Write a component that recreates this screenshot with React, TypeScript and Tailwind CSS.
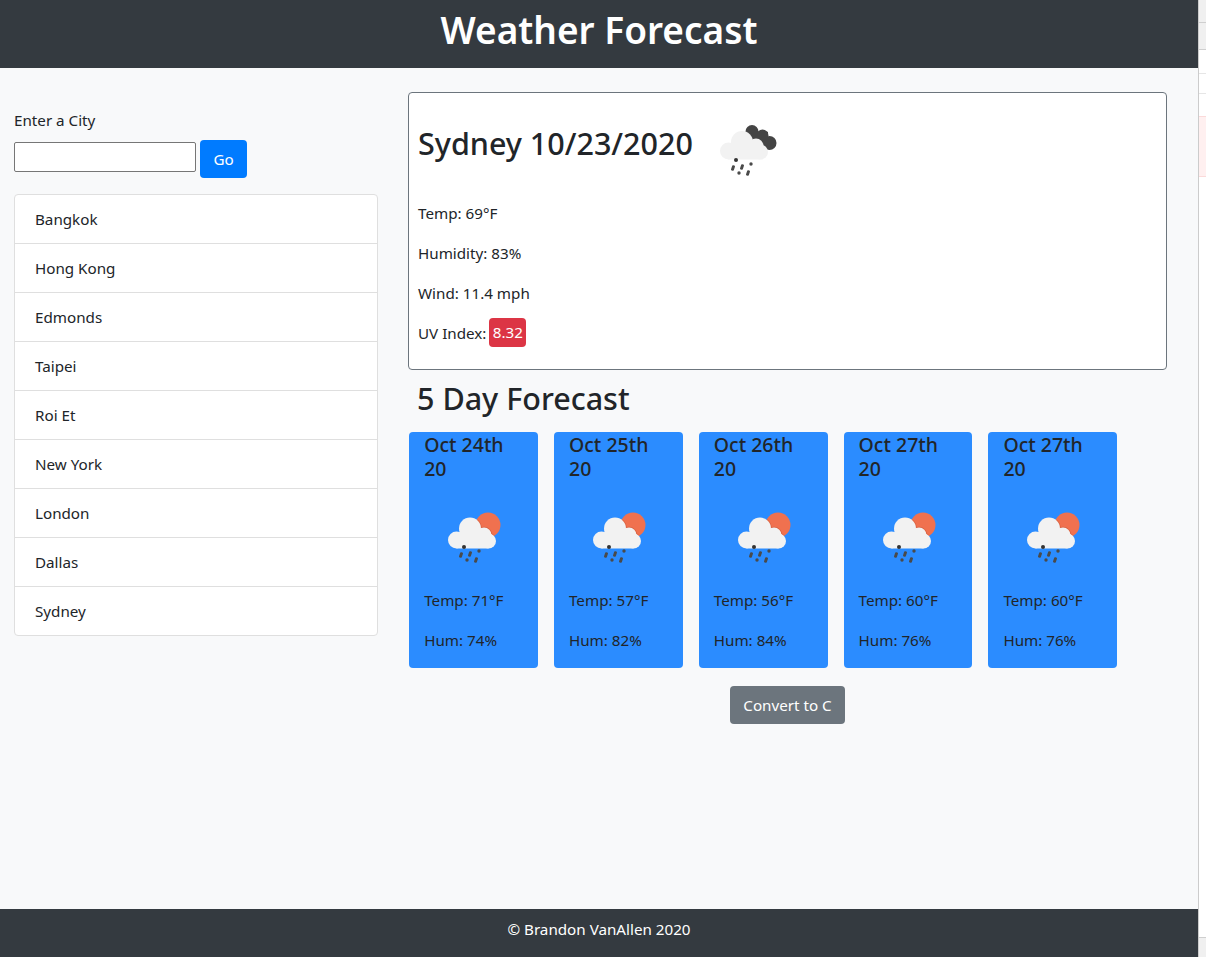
import React from "react";

const CITIES = ["Bangkok", "Hong Kong", "Edmonds", "Taipei", "Roi Et", "New York", "London", "Dallas", "Sydney"];

const FORECAST = [
  { date: "Oct 24th 20", temp: "71", hum: "74" },
  { date: "Oct 25th 20", temp: "57", hum: "82" },
  { date: "Oct 26th 20", temp: "56", hum: "84" },
  { date: "Oct 27th 20", temp: "60", hum: "76" },
  { date: "Oct 27th 20", temp: "60", hum: "76" },
];

const CloudShape = ({ top, ...rest }: { top: number } & React.SVGProps<SVGGElement>) => (
  <g {...rest}>
    <circle cx="13.500" cy="32" r="8.500" />
    <circle cx="27" cy={top} r="11" />
    <circle cx="41" cy="27" r="7.500" />
    <circle cx="45.500" cy="33" r="7.500" />
    <rect x="13.500" y="25" width="32" height="15.500" />
  </g>
);

const Rain = ({ dy }: { dy: number }) => (
  <g fill="#4a4a4a" transform={`translate(0 ${dy})`}>
    <circle cx="21" cy="39" r="2" fill="#333333" />
    <rect x="16.500" y="44.300" width="3" height="5.400" rx="1" transform="rotate(18 18 47)" />
    <rect x="25.500" y="43.300" width="3" height="5.400" rx="1" transform="rotate(18 27 46)" />
    <circle cx="36" cy="43" r="1.700" />
    <circle cx="24" cy="52" r="1.700" />
    <rect x="31.500" y="49.300" width="3" height="5.400" rx="1" transform="rotate(18 33 52)" />
  </g>
);

// light cloud with rain, sun or dark cloud peeking out behind it
const RainIcon = ({ dark }: { dark?: boolean }) => (
  <svg width="65" height="60" viewBox="0 0 65 60" className="block">
    {dark ? (
      <>
        <g fill="#444444">
          <circle cx="37" cy="13.500" r="6.500" />
          <circle cx="47.500" cy="17.500" r="6" />
          <circle cx="54.500" cy="25" r="7" />
          <rect x="37" y="14" width="16" height="16" />
        </g>
        <CloudShape top={23} fill="#f2f2f2" transform="translate(0 1)" />
        <Rain dy={3} />
      </>
    ) : (
      <>
        <clipPath id="sun-disc">
          <circle cx="45" cy="17" r="12.500" />
        </clipPath>
        <circle cx="45" cy="17" r="12.500" fill="#f0714f" />
        <g clipPath="url(#sun-disc)">
          <CloudShape top={20.5} fill="#f2f2f2" stroke="#d9603f" strokeWidth="1.500" />
        </g>
        <CloudShape top={20.5} fill="#f2f2f2" />
        <Rain dy={0} />
      </>
    )}
  </svg>
);

export default function App() {
  return (
    <div className="flex h-[957px] w-[1206px] overflow-hidden bg-white font-['Noto_Sans',sans-serif] text-[15.2px] leading-6 text-[#212529]">
      <div className="flex w-[1198px] shrink-0 flex-col bg-[#f8f9fa]">
        {/* Header */}
        <header className="flex h-[68px] shrink-0 items-center justify-center bg-[#343a40] pb-[8px]">
          <h1 className="text-[37px] font-semibold leading-[48px] text-white">Weather Forecast</h1>
        </header>

        <main className="flex flex-1">
          {/* Search + saved cities */}
          <section className="w-[378px] shrink-0 pl-[14px] pt-[40px]">
            <label className="block h-[24px] leading-6">Enter a City</label>
            <div className="mt-[8px] flex items-center gap-[4px]">
              <input
                type="text"
                className="-mt-[4px] h-[30px] w-[182px] rounded-[2px] border border-[#767676] bg-white"
              />
              <button className="h-[38px] w-[47px] rounded-[4px] bg-[#007bff] text-white">Go</button>
            </div>
            <ul className="mt-[16px] rounded-[4px] border border-[#dfdfdf] bg-white">
              {CITIES.map((city, i) => (
                <li
                  key={city}
                  className={`flex items-center pl-[20px] ${i > 0 ? "h-[49px] border-t border-[#dfdfdf]" : "h-[48px]"}`}
                >
                  {city}
                </li>
              ))}
            </ul>
          </section>

          {/* Current weather + forecast */}
          <section className="ml-[30px] w-[759px] shrink-0 pt-[24px]">
            <div className="h-[278px] rounded-[4px] border border-[#6c757d] bg-white px-[9px]">
              <div className="flex h-[108px] items-start pt-[25px]">
                <h2 className="mt-[6px] text-[30.5px] font-medium leading-[38px]">Sydney 10/23/2020</h2>
                <div className="ml-[22px]">
                  <RainIcon dark />
                </div>
              </div>
              <p className="mb-[16px]">Temp: 69°F</p>
              <p className="mb-[16px]">Humidity: 83%</p>
              <p className="mb-[16px]">Wind: 11.4 mph</p>
              <p className="flex h-6 items-center gap-[3px]">
                UV Index:
                <span className="-mt-[2px] flex h-[29px] w-[37px] shrink-0 items-center justify-center rounded-[4px] bg-[#dc3545] text-white">
                  8.32
                </span>
              </p>
            </div>

            <h2 className="ml-[9px] mt-[9px] text-[30.5px] font-medium leading-[38px]">5 Day Forecast</h2>

            <div className="ml-[1.2px] mt-[15px] flex gap-[16px]">
              {FORECAST.map((day, i) => (
                <div key={i} className="h-[236px] w-[128.8px] rounded-[4px] bg-[#2b8cff] px-[15px]">
                  <h5 className="pt-[1px] text-[19.5px] font-medium leading-6">{day.date}</h5>
                  <div className="ml-[19px] mt-[27px]">
                    <RainIcon />
                  </div>
                  <p className="mt-[20px]">Temp: {day.temp}°F</p>
                  <p className="mt-[16px]">Hum: {day.hum}%</p>
                </div>
              ))}
            </div>

            <div className="mt-[18px] flex justify-center">
              <button className="h-[38px] w-[115px] rounded-[4px] bg-[#6c757d] text-white">Convert to C</button>
            </div>
          </section>
        </main>

        <footer className="flex h-[48px] shrink-0 items-center justify-center bg-[#343a40] pb-[8px] text-white">
          © Brandon VanAllen 2020
        </footer>
      </div>

      {/* Sliver of the neighbouring window at the right edge */}
      <aside className="flex w-[8px] shrink-0 flex-col border-l border-[#cccccc]">
        <div className="h-[23px] border-b border-[#cfcfcf] bg-[#f0f0f0]" />
        <div className="h-[27px] border-b border-[#cfcfcf] bg-[#f0f0f0]" />
        <div className="h-[24px] border-b border-[#e6e6e6]" />
        <div className="h-[20px] border-b border-[#e6e6e6]" />
        <div className="h-[22px]" />
        <div className="h-[61px] border-y border-[#fbdada] bg-[#fff0f0]" />
        <div className="flex-1" />
        <div className="h-[20px] border-t border-[#cfcfcf] bg-[#f0f0f0]" />
      </aside>
    </div>
  );
}
